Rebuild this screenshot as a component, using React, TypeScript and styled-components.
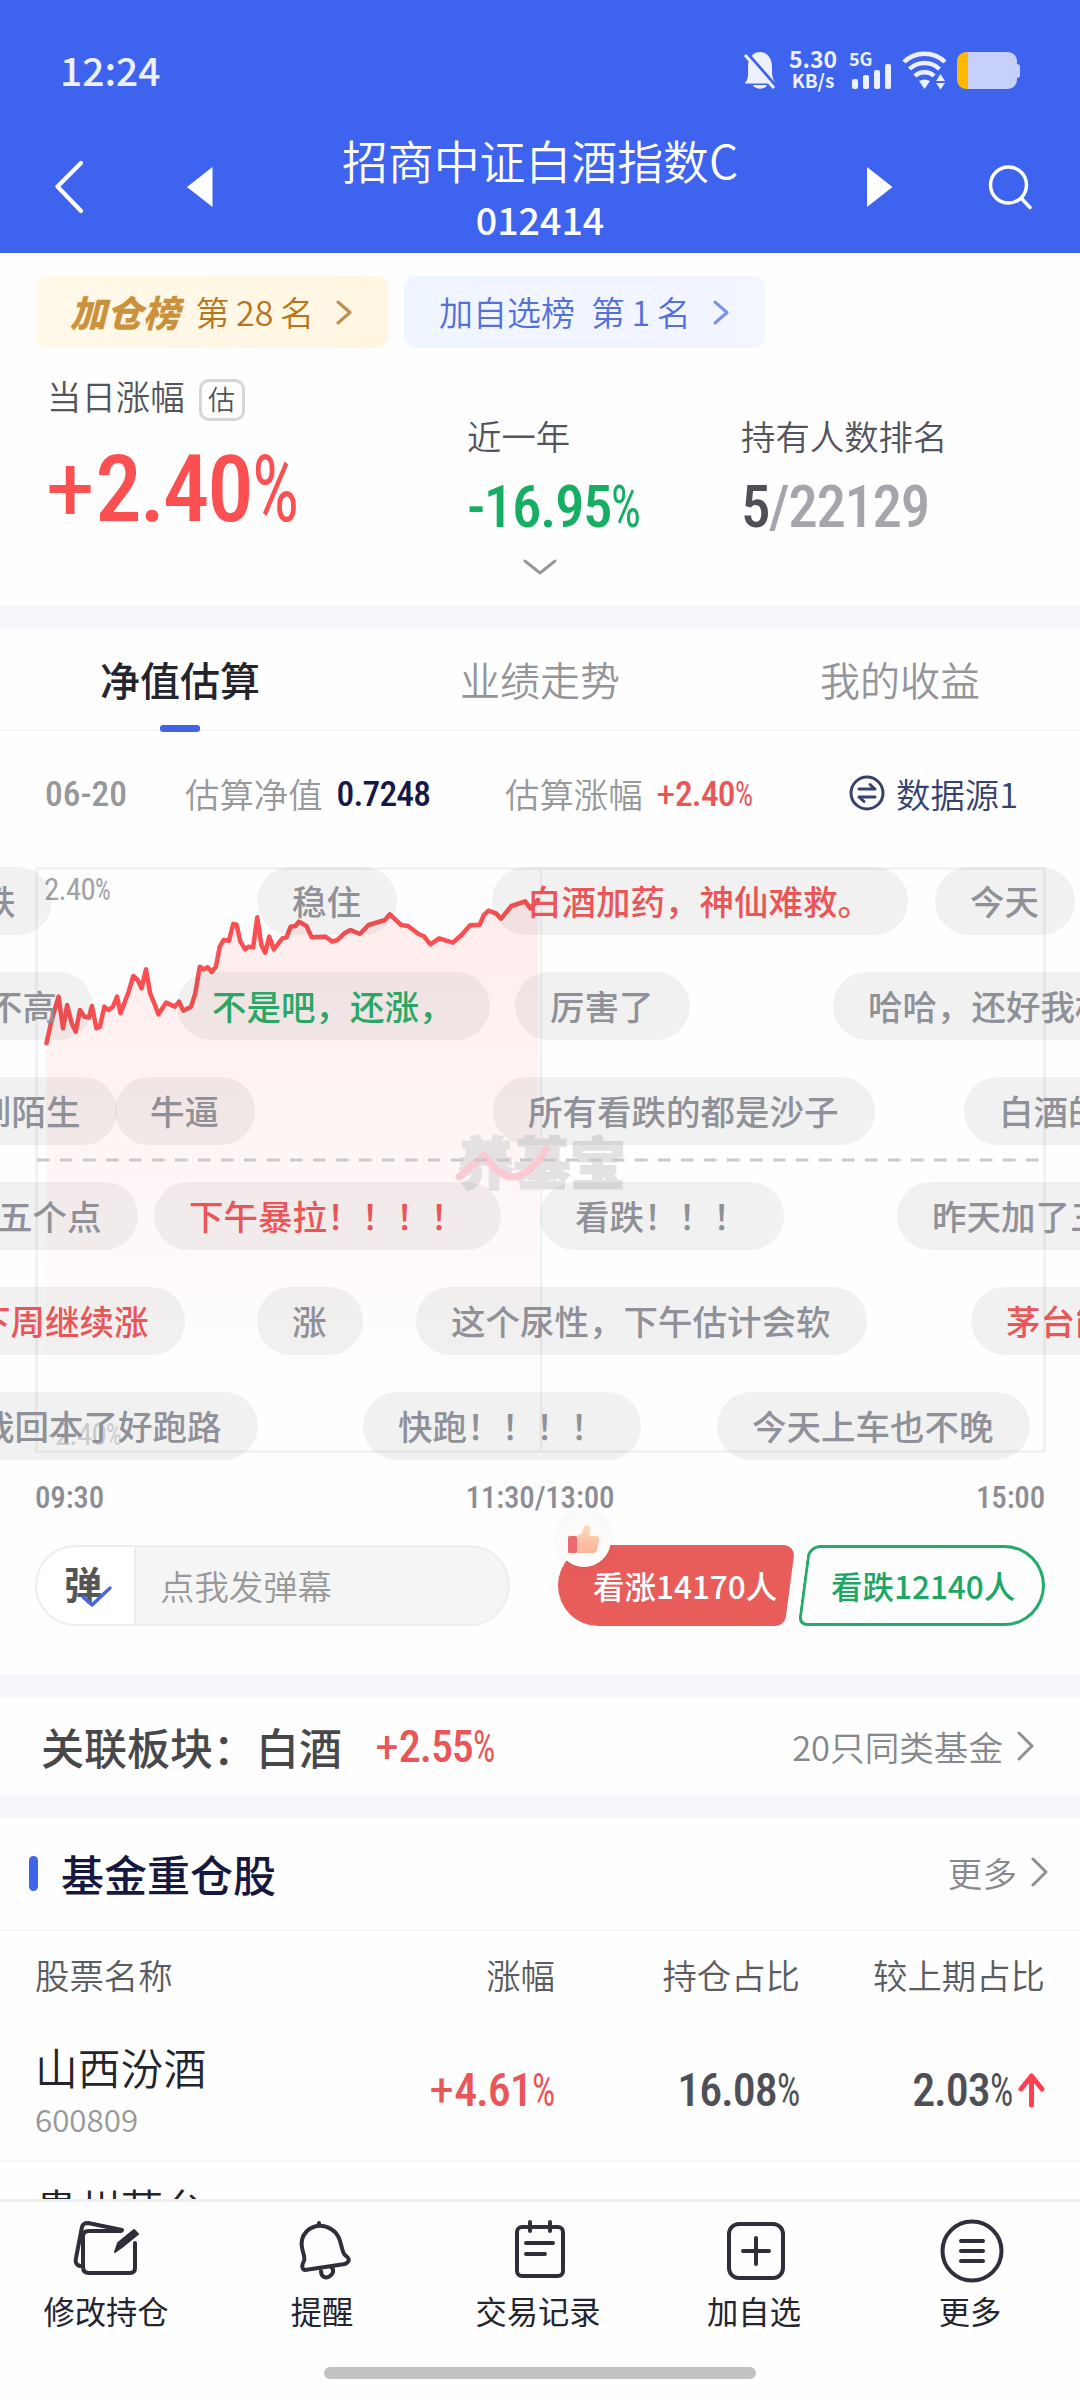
import React from "react";
import styled, { createGlobalStyle, css } from "styled-components";

const CJK = `"Noto Sans CJK SC", "Noto Sans", sans-serif`;

const GlobalStyle = createGlobalStyle`
  *, *::before, *::after { box-sizing: border-box; }
  body { margin: 0; background: #fff; font-family: ${CJK}; }
`;

const Screen = styled.div`
  width: 1080px;
  height: 2400px;
  display: flex;
  flex-direction: column;
  overflow: hidden;
  background: #fefefe;
  color: #54555c;
  white-space: nowrap;
`;

/* Condensed figures; signs are set lighter than the digits */
const Figure = styled.span<{ $size: number; $color: string; $weight: number; $track: number }>`
  display: inline-block;
  font-family: Roboto, sans-serif;
  font-size: ${(p) => p.$size}px;
  font-weight: ${(p) => p.$weight};
  font-stretch: 75%;
  line-height: 1;
  letter-spacing: ${(p) => p.$track}em;
  color: ${(p) => p.$color};
`;
const Sign = styled.span<{ $kind: "plus" | "percent" }>`
  display: inline-block;
  font-weight: 400;
  ${(p) =>
    p.$kind === "plus"
      ? css`transform: scaleX(1.08); margin-right: 0.045em;`
      : css`transform: scaleX(0.8); transform-origin: left; margin-right: -0.1em;`}
`;
type DinProps = { size: number; color: string; weight?: number; track?: number; children: string };
const Din = ({ size, color, weight = 500, track = -0.024, children }: DinProps) => (
  <Figure $size={size} $color={color} $weight={weight} $track={track}>
    {children.split(/([+%])/).map((part, i) =>
      part === "+" ? (
        <Sign key={i} $kind="plus">+</Sign>
      ) : part === "%" ? (
        <Sign key={i} $kind="percent">%</Sign>
      ) : (
        part
      )
    )}
  </Figure>
);

/* ---------- header ---------- */
const Header = styled.header`
  flex: none;
  height: 253px;
  background: #3e63ef;
  color: #fff;
`;
const StatusBar = styled.div`
  height: 127px;
  padding: 13px 60px 0;
  display: flex;
  align-items: center;
`;
const Clock = styled.div`
  flex: 1;
  font-size: 39px;
  font-weight: 500;
  color: #edf0ff;
  margin-top: -3px;
`;
const StatusIcons = styled.div`
  display: flex;
  align-items: center;
  height: 38px;
  color: #edf0ff;
`;
const NetSpeed = styled.div`
  width: 50px;
  margin-left: 11px;
  text-align: center;
  font-weight: 700;
  font-size: 23px;
  line-height: 20px;
  small { display: block; font-size: 19px; line-height: 24px; }
`;
const Signal = styled.div`
  width: 44px;
  height: 38px;
  margin: 0 9px 0 11px;
  display: grid;
  grid-template: 14px 24px / 1fr;
  font-size: 18px;
  font-weight: 700;
  line-height: 14px;
`;
const Bars = styled.div`
  display: flex;
  align-items: flex-end;
  gap: 5px;
  padding-left: 3px;
  margin-top: -3px;
`;
const SignalBar = styled.i<{ $h: number }>`
  width: 6px;
  height: ${(p) => p.$h}px;
  border-radius: 2px;
  background: #edf0ff;
`;
const Battery = styled.div`
  width: 60px;
  height: 37px;
  margin: 0 3px 0 9px;
  position: relative;
  border-radius: 9px;
  background: linear-gradient(90deg, #ffb800 11px, #c6d0fa 11px);
  &::after {
    content: "";
    position: absolute;
    right: -3px;
    top: 12px;
    width: 3px;
    height: 14px;
    border-radius: 0 3px 3px 0;
    background: #c6d0fa;
  }
`;
const TitleBar = styled.div`
  height: 118px;
  display: grid;
  grid-template-columns: 140px 120px 1fr 120px 140px;
  align-items: center;
  justify-items: center;
`;
const TitleBlock = styled.div`
  text-align: center;
`;
const FundName = styled.div`
  font-size: 45.9px;
  line-height: 64px;
  font-weight: 350;
`;
const FundCode = styled.div`
  font-size: 37.6px;
  line-height: 56px;
  font-weight: 500;
`;

/* ---------- summary ---------- */
const Summary = styled.section`
  flex: none;
  height: 352px;
  padding: 23px 35px 0;
`;
const Badges = styled.div`
  display: flex;
  gap: 16px;
`;
const Badge = styled.div<{ $w: number; $tone: "gold" | "blue" }>`
  width: ${(p) => p.$w}px;
  height: 72px;
  padding: 0 36px 2px 35px;
  display: flex;
  align-items: center;
  border-radius: 11px;
  font-size: 34px;
  ${(p) =>
    p.$tone === "gold"
      ? css`background: linear-gradient(90deg, #fff9e9, #fff6e2); color: #b8761c;`
      : css`background: linear-gradient(90deg, #eff6ff, #f3f5ff); color: #5570da;`}
  svg { margin-left: auto; margin-top: 2px; }
`;
const BadgeMark = styled.b`
  font-weight: 900;
  font-style: italic;
  font-size: 36.5px;
  color: #cb923e;
`;
const BadgeRank = styled.span<{ $gap: number }>`
  margin-left: ${(p) => p.$gap}px;
  font-weight: 350;
  word-spacing: -1px;
`;
const Stats = styled.div`
  display: grid;
  grid-template-columns: 420px 274px 1fr;
  padding-left: 12px;
  height: 196px;
`;
const StatLabel = styled.div`
  display: flex;
  align-items: center;
  gap: 14px;
  height: 46px;
  font-size: 34.4px;
  font-weight: 350;
`;
const EstTag = styled.span`
  width: 46px;
  height: 42px;
  margin-top: 9px;
  padding-bottom: 2px;
  display: grid;
  place-items: center;
  border: 3px solid #d5d7d7;
  border-radius: 10px;
  font-size: 27px;
  line-height: 1;
`;
const MainStat = styled.div`
  padding-top: 24px;
  ${Figure} { margin-top: 25px; display: block; }
`;
const SideStat = styled.div`
  padding-top: 64px;
  ${Figure} { margin-top: 19px; }
`;
const Expand = styled.div`
  display: flex;
  justify-content: center;
  margin-top: 15px;
`;
const Gap = styled.div<{ $h: number }>`
  flex: none;
  height: ${(p) => p.$h}px;
  background: #f6f7fb;
`;

/* ---------- tabs ---------- */
const Tabs = styled.nav`
  flex: none;
  height: 103px;
  display: grid;
  grid-template-columns: repeat(3, 1fr);
  border-bottom: 2px solid #f6f6f8;
`;
const Tab = styled.div<{ $active?: boolean }>`
  height: 104px;
  display: flex;
  flex-direction: column;
  align-items: center;
  justify-content: space-between;
  padding-top: 21px;
  font-size: 40px;
  line-height: 60px;
  font-weight: ${(p) => (p.$active ? 500 : 350)};
  color: ${(p) => (p.$active ? "#23242c" : "#94959a")};
  &::after {
    content: "";
    width: 40px;
    height: 7px;
    border-radius: 3px;
    background: ${(p) => (p.$active ? "#4263e6" : "transparent")};
  }
`;
const EstimateRow = styled.div`
  flex: none;
  height: 126px;
  padding: 0 61px 3px 45px;
  display: grid;
  grid-template-columns: 140px 320px 344px 1fr;
  align-items: center;
  font-size: 34.4px;
  font-weight: 350;
  color: #97989b;
  ${Figure} { margin-top: 5px; }
`;
const Pair = styled.div<{ $gap: number }>`
  display: flex;
  align-items: center;
  gap: ${(p) => p.$gap}px;
`;
const Source = styled.div`
  display: flex;
  align-items: center;
  gap: 11px;
  color: #37426f;
`;

/* ---------- chart ---------- */
const ChartArea = styled.section`
  flex: none;
  height: 614px;
  position: relative;
  overflow: hidden;
`;
const ChartSvg = styled.svg`
  display: block;
`;
const ZeroLine = styled.svg`
  position: absolute;
  left: 0;
  top: 301px;
`;
const AxisLabel = styled.div<{ $top: number; $left: number; $faint?: boolean }>`
  position: absolute;
  top: ${(p) => p.$top}px;
  left: ${(p) => p.$left}px;
  opacity: ${(p) => (p.$faint ? 0.35 : 1)};
`;
const Watermark = styled.div`
  position: absolute;
  left: 458px;
  top: 263px;
  font-size: 56px;
  line-height: 80px;
  font-weight: 900;
  color: #e4e1e2;
  -webkit-text-stroke: 2px #e4e1e2;
`;
const WatermarkCurve = styled.svg`
  position: absolute;
  left: -4px;
  top: 16px;
`;
const Bullet = styled.div<{ $row: number; $x: number; $tone?: "up" | "down" }>`
  position: absolute;
  top: ${(p) => 10 + p.$row * 105}px;
  left: ${(p) => p.$x}px;
  height: 68px;
  padding: 0 36px 0 35px;
  border-radius: 34px;
  background: rgba(45, 42, 42, 0.063);
  font-size: 34.5px;
  font-weight: 500;
  line-height: 67px;
  color: ${(p) => (p.$tone === "up" ? "#ea5557" : p.$tone === "down" ? "#2aa765" : "#909198")};
`;
const TimeAxis = styled.div`
  flex: none;
  height: 74px;
  padding: 11px 35px 0;
  display: grid;
  grid-template-columns: 1fr 1fr 1fr;
  > :nth-child(2) { justify-self: center; }
  > :nth-child(3) { justify-self: end; }
`;

/* ---------- vote row ---------- */
const ActionRow = styled.section`
  flex: none;
  height: 130px;
  padding: 0 35px;
  display: flex;
`;
const CommentBox = styled.div`
  width: 475px;
  height: 81px;
  display: flex;
  border: 2px solid #eeeeef;
  border-radius: 41px;
  overflow: hidden;
  background: #f5f5f5;
  font-size: 34.4px;
  font-weight: 350;
  line-height: 76px;
  color: #999;
`;
const CommentToggle = styled.div`
  position: relative;
  width: 99px;
  padding-left: 27px;
  margin-right: 24px;
  background: #fff;
  border-right: 2px solid #ececec;
  font-size: 38px;
  font-weight: 700;
  line-height: 71px;
  color: #555;
  svg { position: absolute; left: 43px; top: 38px; }
`;
const Vote = styled.div<{ $w: number; $kind: "up" | "down" }>`
  position: relative;
  z-index: 0;
  width: ${(p) => p.$w}px;
  height: 81px;
  display: flex;
  align-items: center;
  font-size: 31.5px;
  font-weight: 500;
  padding-bottom: 1px;
  &::before, &::after {
    content: "";
    position: absolute;
    z-index: -1;
    top: 0;
    bottom: 0;
  }
  ${(p) =>
    p.$kind === "up"
      ? css`
          margin-left: 48px;
          padding-left: 35px;
          color: #fff;
          &::before { left: 0; width: 60%; border-radius: 41px 0 0 41px; background: #e85d59; }
          &::after { right: 5px; width: 60%; border-radius: 0 12px 9px 0; background: #e85d59; transform: skewX(-7.5deg); }
        `
      : css`
          margin-left: 4px;
          padding-left: 32px;
          color: #1ca864;
          &::before { left: 4px; width: 55%; border: 3px solid #22ac69; border-right: 0; border-radius: 12px 0 0 9px; transform: skewX(-7.5deg); }
          &::after { right: 0; width: 50%; border: 3px solid #22ac69; border-left: 0; border-radius: 0 41px 41px 0; }
        `}
`;
const ThumbBadge = styled.div`
  position: absolute;
  left: -1px;
  top: -32px;
  width: 54px;
  height: 54px;
  display: grid;
  place-items: center;
  border-radius: 50%;
  background: #fdfafa;
  box-shadow: 0 0 8px rgba(0, 0, 0, 0.07);
`;

/* ---------- related sector ---------- */
const Related = styled.section`
  flex: none;
  height: 99px;
  padding: 0 46px 1px 41px;
  display: flex;
  align-items: center;
  font-size: 43px;
  font-weight: 500;
  color: #48484a;
  ${Figure} { margin-left: 34px; padding-top: 2px; }
`;
const MoreLink = styled.div`
  margin-left: auto;
  display: flex;
  align-items: center;
  gap: 14px;
  font-size: 34.6px;
  font-weight: 350;
  color: #87888b;
`;

/* ---------- holdings ---------- */
const Holdings = styled.section`
  flex: 1;
  min-height: 0;
  overflow: hidden;
`;
const HoldingsHead = styled.div`
  height: 113px;
  padding: 0 32px 0 29px;
  display: flex;
  align-items: center;
  border-bottom: 2px solid #f7f7f8;
  ${MoreLink} { padding-bottom: 4px; }
`;
const HoldingsTitle = styled.h2`
  margin: 0;
  display: flex;
  align-items: center;
  gap: 23px;
  font-size: 43px;
  font-weight: 500;
  line-height: 60px;
  padding-bottom: 1px;
  color: #17183f;
  &::before {
    content: "";
    width: 9px;
    height: 35px;
    border-radius: 5px;
    background: #4165ea;
  }
`;
const Columns = styled.div`
  display: grid;
  grid-template-columns: 301px 219px 245px 245px;
  padding: 0 35px;
  align-items: center;
  > :not(:first-child) { justify-self: end; }
`;
const ColumnNames = styled(Columns)`
  height: 90px;
  padding-bottom: 5px;
  font-size: 34.4px;
  font-weight: 350;
  color: #5b5c62;
`;
const StockRow = styled(Columns)`
  height: 141px;
  padding-bottom: 2px;
  border-bottom: 2px solid #f7f7f8;
`;
const StockName = styled.div`
  font-size: 42.8px;
  line-height: 58px;
  font-weight: 350;
  color: #23242c;
  small {
    display: block;
    font-size: 31.3px;
    line-height: 48px;
    color: #97989b;
  }
`;
const Delta = styled.div`
  display: flex;
  align-items: center;
  gap: 5px;
`;

/* ---------- bottom bar ---------- */
const BottomBar = styled.footer`
  flex: none;
  height: 201px;
  border-top: 3px solid #efeff0;
  background: #fefefe;
`;
const NavItems = styled.div`
  display: grid;
  grid-template-columns: repeat(5, 1fr);
  margin: 0 2px 0 -2px;
`;
const NavItem = styled.div`
  display: flex;
  flex-direction: column;
  align-items: center;
  height: 165px;
  padding-top: 16px;
  font-size: 31.3px;
  font-weight: 400;
  line-height: 44px;
  color: #24252e;
  svg { margin: 0 0 5px 4px; }
`;
const HomeIndicator = styled.div`
  width: 432px;
  height: 12px;
  margin: 0 auto;
  border-radius: 6px;
  background: #c2c2c2;
`;

type ChevronProps = { color: string; w?: number; h?: number; stroke?: number };
const Chevron = ({ color, w = 17, h = 30, stroke = 3 }: ChevronProps) => (
  <svg width={w} height={h} fill="none" stroke={color} strokeWidth={stroke} strokeLinecap="round" strokeLinejoin="round">
    <path d={`M2 2 L${w - 2} ${h / 2} L2 ${h - 2}`} />
  </svg>
);

/* Intraday samples, on a grid of 1568 x 1080 units */
const SERIES =
  "135,580 150,510 170,440 183,535 195,465 208,520 220,545 232,480 245,500 258,503 267,468 280,535 290,530 303,470 315,480 328,470 340,440 350,490 372,430 387,378 400,390 411,415 424,358 436,430 448,460 460,493 482,458 508,470 520,455 532,482 555,470 567,430 580,350 592,358 603,352 615,366 627,350 638,290 650,270 665,272 677,222 687,224 698,275 712,298 722,290 735,292 747,202 759,285 770,308 782,260 795,298 820,265 832,262 844,230 858,228 868,215 890,228 905,262 945,260 965,275 980,270 1000,250 1018,240 1045,252 1070,225 1118,210 1132,193 1165,225 1185,228 1215,252 1230,258 1250,283 1275,265 1315,278 1340,255 1365,226 1393,224 1405,195 1418,182 1440,190 1455,206 1485,168 1525,154 1540,175 1562,150";

type Tone = "up" | "down" | undefined;
const BULLETS: [number, number, string, Tone][] = [
  [0, -54, "跌", undefined],
  [0, 257, "稳住", undefined],
  [0, 492, "白酒加药，神仙难救。", "up"],
  [0, 935, "今天", undefined],
  [1, -47, "不高", undefined],
  [1, 177, "不是吧，还涨，", "down"],
  [1, 515, "厉害了", undefined],
  [1, 833, "哈哈，还好我权", undefined],
  [2, -58, "到陌生", undefined],
  [2, 115, "牛逼", undefined],
  [2, 493, "所有看跌的都是沙子", undefined],
  [2, 964, "白酒的", undefined],
  [3, -37, "五个点", undefined],
  [3, 154, "下午暴拉！！！！", "up"],
  [3, 540, "看跌！！！", undefined],
  [3, 897, "昨天加了三", undefined],
  [4, -59, "下周继续涨", "up"],
  [4, 257, "涨", undefined],
  [4, 416, "这个尿性，下午估计会软", undefined],
  [4, 971, "茅台能", "up"],
  [5, -55, "我回本了好跑路", undefined],
  [5, 363, "快跑！！！！", undefined],
  [5, 717, "今天上车也不晚", undefined],
];

const ink = { fill: "none", stroke: "#2e2f3a", strokeWidth: 4, strokeLinecap: "round", strokeLinejoin: "round" } as const;

const NAV = [
  {
    label: "修改持仓",
    icon: (
      <>
        <path d="M8 48 C4 47 3 44 4 40 L10 9 Q11 5 16 5 L50 12" />
        <path d="M49 13 H17 Q11 13 11 18 V49 Q11 55 17 55 H58 Q63 55 63 50 V25" />
        <path d="M43 34 L46 25 L62 12 L66 16 L50 29 Z" fill="#2e2f3a" strokeWidth="2" />
      </>
    ),
  },
  {
    label: "提醒",
    icon: (
      <g transform="translate(4 0)">
        <path d="M27 5 V8 M13 52 C9 51 10 46 12 43 C14 37 8 32 10 22 C13 9 28 4 39 11 C51 18 48 32 53 37 C58 41 58 43 53 46 Z" />
        <path d="M29 53 C29 59 34 61 38 58 C42 55 42 51 39 49" />
      </g>
    ),
  },
  {
    label: "交易记录",
    icon: (
      <>
        <rect x="13" y="9" width="46" height="49" rx="5" />
        <path d="M26 4 V13 M46 4 V13 M22 25 H49 M22 36 H41" />
      </>
    ),
  },
  {
    label: "加自选",
    icon: (
      <>
        <rect x="9" y="6" width="54" height="54" rx="10" />
        <path d="M36 20 V46 M23 33 H49" />
      </>
    ),
  },
  {
    label: "更多",
    icon: (
      <>
        <circle cx="36" cy="33" r="29.500" />
        <path d="M25 23 H47 M25 33 H47 M25 43 H47" />
      </>
    ),
  },
];

export default function App() {
  return (
    <Screen>
      <GlobalStyle />
      <Header>
        <StatusBar>
          <Clock>12:24</Clock>
          <StatusIcons>
            <svg width="34" height="40" viewBox="0 0 34 40" fill="#edf0ff">
              <path d="M2 33 C6 28 5 24 5 17 C5 8 10 2 17 2 C24 2 29 8 29 17 C29 24 29 28 32 32 V33.5 H2 Z" />
              <path d="M10 35 H24 C22 40 12 40 10 35 Z" />
              <path d="M5 4 L34 37" stroke="#3e63ef" strokeWidth="3" />
              <path d="M2 5 L31 38" stroke="#edf0ff" strokeWidth="3.2" />
            </svg>
            <NetSpeed>5.30<small>KB/s</small></NetSpeed>
            <Signal>
              5G
              <Bars>
                {[10, 14, 19, 25].map((h) => <SignalBar key={h} $h={h} />)}
              </Bars>
            </Signal>
            <svg width="46" height="40" viewBox="0 0 46 40" fill="none" stroke="#edf0ff" strokeWidth="4.4">
              <path d="M2 12 C13 1 32 1 43 12 M7.500 19 C16 11 29 11 37.500 19 M13 26 C18 21 27 21 32 26" />
              <path d="M17 31 Q22.500 28 28 31 L22.500 39 Z" fill="#edf0ff" stroke="none" />
              <path d="M34 31 L38.500 24 L43 31 Z M34 33 L38.500 39.500 L43 33 Z" fill="#edf0ff" stroke="none" />
            </svg>
            <Battery />
          </StatusIcons>
        </StatusBar>
        <TitleBar>
          <svg width="30" height="54" fill="none" stroke="#fff" strokeWidth="4.200" strokeLinecap="round" strokeLinejoin="round">
            <path d="M26 3 L2.500 26.500 L26 51" />
          </svg>
          <svg width="26" height="40" fill="#fff"><path d="M0 20 L25.500 0 V40 Z" /></svg>
          <TitleBlock>
            <FundName>招商中证白酒指数C</FundName>
            <FundCode>012414</FundCode>
          </TitleBlock>
          <svg width="26" height="40" fill="#fff"><path d="M25.500 20 L0 0 V40 Z" /></svg>
          <svg width="46" height="46" fill="none" stroke="#fff" strokeWidth="3.500" strokeLinecap="round">
            <circle cx="21.500" cy="21" r="18" />
            <path d="M34.500 34.500 L43 43.500" />
          </svg>
        </TitleBar>
      </Header>

      <Summary>
        <Badges>
          <Badge $w={353} $tone="gold">
            <BadgeMark>加仓榜</BadgeMark>
            <BadgeRank $gap={16}>第 28 名</BadgeRank>
            <Chevron color="#c18c50" w={16} h={25} />
          </Badge>
          <Badge $w={361} $tone="blue">
            <BadgeRank $gap={0}>加自选榜</BadgeRank>
            <BadgeRank $gap={16}>第 1 名</BadgeRank>
            <Chevron color="#7c92e2" w={16} h={25} />
          </Badge>
        </Badges>
        <Stats>
          <MainStat>
            <StatLabel>当日涨幅<EstTag>估</EstTag></StatLabel>
            <Din size={93} color="#fb5052">+2.40%</Din>
          </MainStat>
          <SideStat>
            <StatLabel>近一年</StatLabel>
            <Din size={59} color="#15ae62">-16.95%</Din>
          </SideStat>
          <SideStat>
            <StatLabel>持有人数排名</StatLabel>
            <Din size={59} color="#4f5057">5</Din>
            <Din size={59} color="#a5a6ab">/22129</Din>
          </SideStat>
        </Stats>
        <Expand>
          <svg width="34" height="17" fill="none" stroke="#98999c" strokeWidth="3" strokeLinecap="round" strokeLinejoin="round">
            <path d="M2 2 L17 14 L32 2" />
          </svg>
        </Expand>
      </Summary>
      <Gap $h={23} />

      <Tabs>
        <Tab $active>净值估算</Tab>
        <Tab>业绩走势</Tab>
        <Tab>我的收益</Tab>
      </Tabs>
      <EstimateRow>
        <Din size={35.500} color="#97989b" track={0}>06-20</Din>
        <Pair $gap={14}>估算净值<Din size={35.500} color="#17184a">0.7248</Din></Pair>
        <Pair $gap={14}>估算涨幅<Din size={35.500} color="#ea5557">+2.40%</Din></Pair>
        <Source>
          <svg width="36" height="36" fill="none" stroke="#37426f" strokeWidth="3" strokeLinecap="round" strokeLinejoin="round">
            <circle cx="18" cy="18" r="16" />
            <path d="M10 14 H26 L21 9.500 M26 22 H10 L15 26.500" />
          </svg>
          数据源1
        </Source>
      </EstimateRow>

      <ChartArea>
        <ChartSvg width="1080" height="614" fill="none">
          <defs>
            <linearGradient id="rise" x1="0" y1="40" x2="0" y2="540" gradientUnits="userSpaceOnUse">
              <stop offset="0" stopColor="#ff5a5a" stopOpacity="0.11" />
              <stop offset="1" stopColor="#ff5a5a" stopOpacity="0" />
            </linearGradient>
            <clipPath id="under">
              <polygon transform="scale(0.3444 0.3333)" points={`${SERIES} 1565,1800 135,1800`} />
            </clipPath>
          </defs>
          <rect x="36.500" y="11.500" width="1008" height="583" stroke="#f0f1f2" strokeWidth="2.500" />
          <path d="M541 11 V594" stroke="#f0f1f2" strokeWidth="2.500" />
          <g transform="translate(0 -7)">
            <rect x="40" y="0" width="505" height="600" fill="url(#rise)" clipPath="url(#under)" />
            <polyline
              transform="scale(0.3444 0.3333)"
              points={SERIES}
              stroke="#f94f52"
              strokeWidth="4.500"
              strokeLinejoin="round"
              strokeLinecap="round"
              vectorEffect="non-scaling-stroke"
            />
          </g>
        </ChartSvg>
        <AxisLabel $top={17} $left={44}><Din size={31} color="#a2a2a5" weight={400}>2.40%</Din></AxisLabel>
        <AxisLabel $top={562} $left={48} $faint><Din size={31} color="#8a8b92" weight={400}>-2.40%</Din></AxisLabel>
        <Watermark>
          养基宝
          <WatermarkCurve width="175" height="60" fill="none" stroke="#fbc9d2" strokeWidth="7" strokeLinecap="round" strokeLinejoin="round">
            <path d="M5 41 L30 19 Q44 40 58 41 C72 40 84 28 92 13" />
          </WatermarkCurve>
        </Watermark>
        <ZeroLine width="1080" height="4">
          <path d="M37 2 H1040" stroke="#c9c9cb" strokeWidth="3" strokeDasharray="12.5 10.5" />
        </ZeroLine>
        {BULLETS.map(([row, x, text, tone]) => (
          <Bullet key={`${row}-${x}`} $row={row} $x={x} $tone={tone}>{text}</Bullet>
        ))}
      </ChartArea>
      <TimeAxis>
        <Din size={31} color="#8d8e95" track={-0.006}>09:30</Din>
        <Din size={31} color="#8d8e95" track={-0.006}>11:30/13:00</Din>
        <Din size={31} color="#8d8e95" track={-0.006}>15:00</Din>
      </TimeAxis>

      <ActionRow>
        <CommentBox>
          <CommentToggle>
            弹
            <svg width="34" height="26" fill="none" stroke="#4a66dd" strokeWidth="3.500" strokeLinecap="round" strokeLinejoin="round">
              <path d="M3 12 L12 20 L30 3" />
            </svg>
          </CommentToggle>
          点我发弹幕
        </CommentBox>
        <Vote $w={237} $kind="up">
          看涨14170人
          <ThumbBadge>
            <svg width="34" height="32">
              <defs>
                <linearGradient id="thumb" x1="0" y1="0" x2="0" y2="1">
                  <stop offset="0" stopColor="#ffd9ba" />
                  <stop offset="1" stopColor="#fbb49a" />
                </linearGradient>
              </defs>
              <rect x="1" y="12" width="9" height="17" rx="1.500" fill="#ee6a72" />
              <path d="M10 12 L15 9 L17 3 Q19 0 22 2 Q24 5 22 12 H30 Q33 13 32 17 L30 26 Q29 29 26 29 H10 Z" fill="url(#thumb)" />
            </svg>
          </ThumbBadge>
        </Vote>
        <Vote $w={246} $kind="down">看跌12140人</Vote>
      </ActionRow>
      <Gap $h={22} />

      <Related>
        关联板块：白酒
        <Din size={44} color="#ea5557">+2.55%</Din>
        <MoreLink>20只同类基金<Chevron color="#8f9093" /></MoreLink>
      </Related>
      <Gap $h={22} />

      <Holdings>
        <HoldingsHead>
          <HoldingsTitle>基金重仓股</HoldingsTitle>
          <MoreLink>更多<Chevron color="#8f9093" /></MoreLink>
        </HoldingsHead>
        <ColumnNames>
          <span>股票名称</span>
          <span>涨幅</span>
          <span>持仓占比</span>
          <span>较上期占比</span>
        </ColumnNames>
        <StockRow>
          <StockName>山西汾酒<small>600809</small></StockName>
          <Din size={46} color="#ea5557">+4.61%</Din>
          <Din size={46} color="#4f5057">16.08%</Din>
          <Delta>
            <Din size={46} color="#4f5057">2.03%</Din>
            <svg width="27" height="36" fill="none" stroke="#ff4052" strokeWidth="5" strokeLinecap="round" strokeLinejoin="round">
              <path d="M13.500 33 V4 M3 17 L13.500 4 L24 17" />
            </svg>
          </Delta>
        </StockRow>
        <StockRow>
          <StockName>贵州茅台<small>600519</small></StockName>
        </StockRow>
      </Holdings>

      <BottomBar>
        <NavItems>
          {NAV.map((item) => (
            <NavItem key={item.label}>
              <svg width="72" height="66" {...ink}>{item.icon}</svg>
              {item.label}
            </NavItem>
          ))}
        </NavItems>
        <HomeIndicator />
      </BottomBar>
    </Screen>
  );
}
